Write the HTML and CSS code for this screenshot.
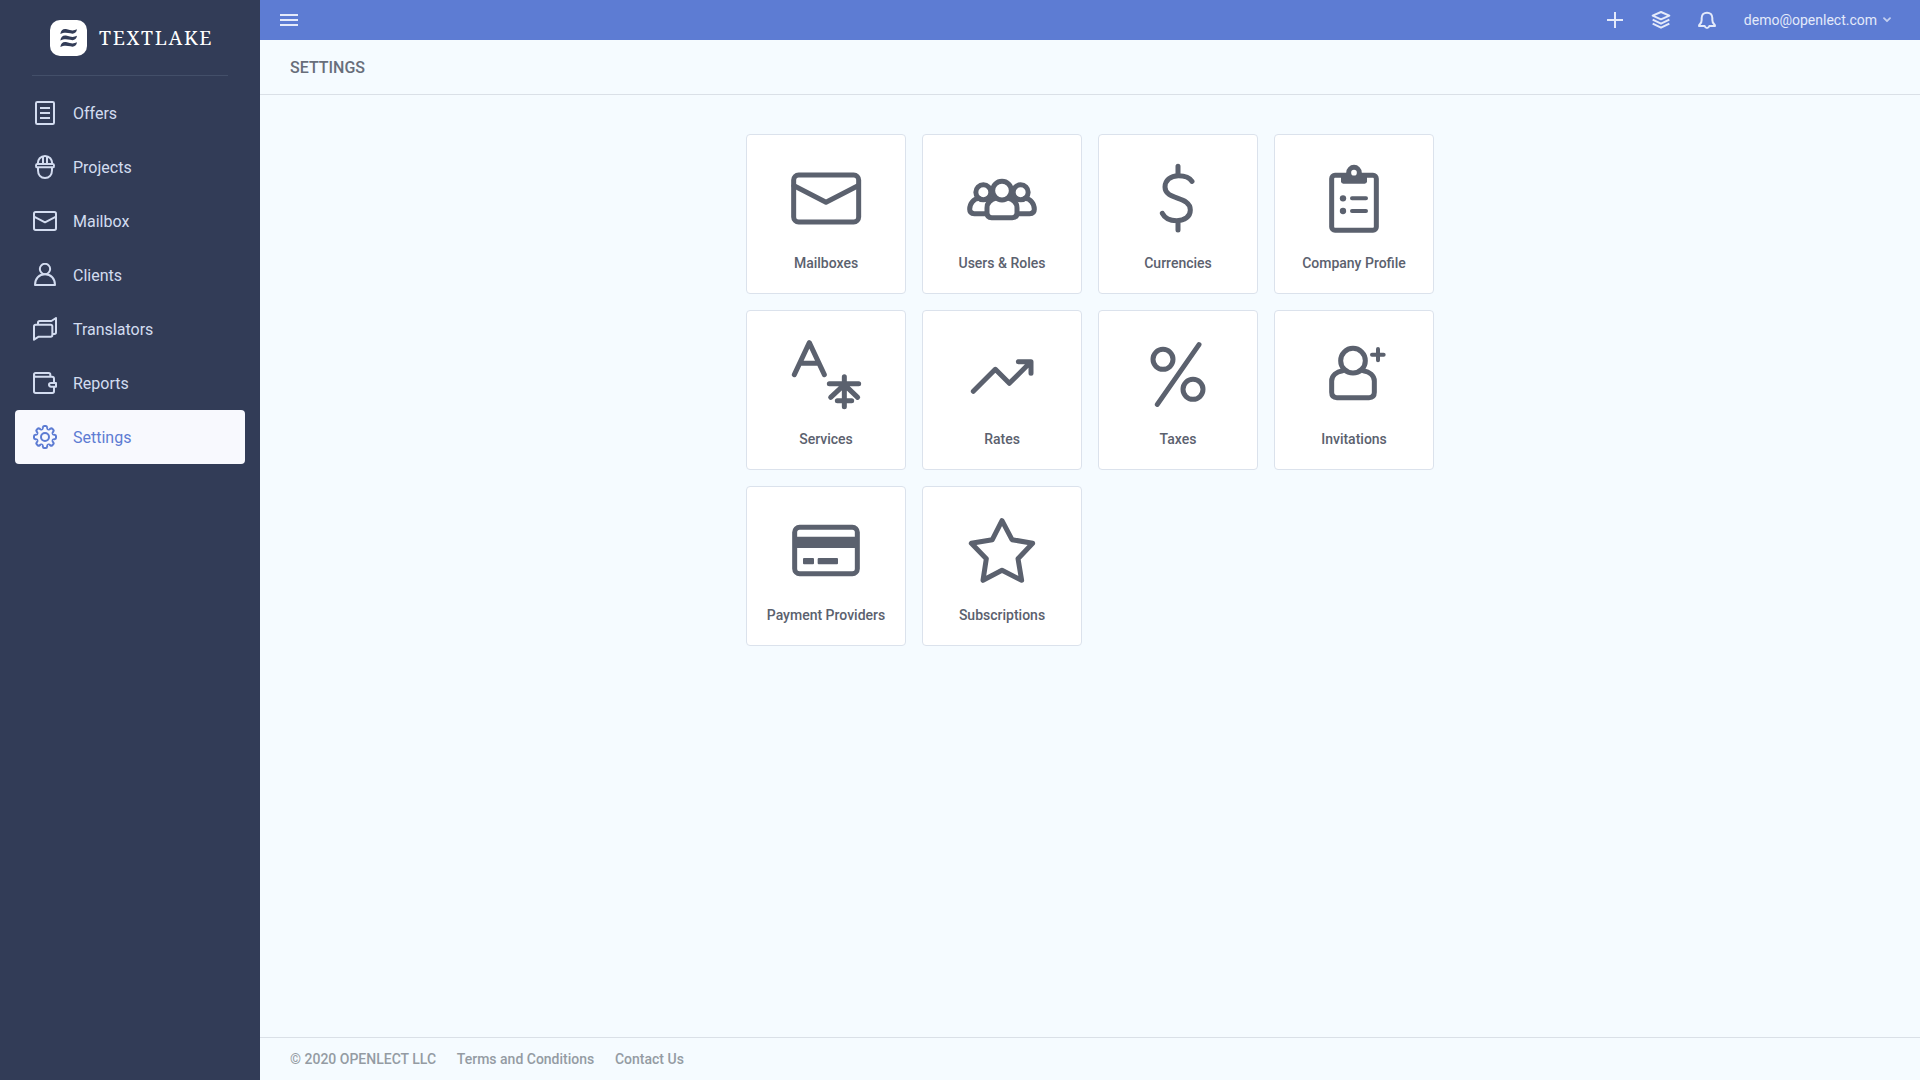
FILE: index.html
```html
<!DOCTYPE html>
<html lang="en">
<head>
<meta charset="utf-8">
<title>Settings - Textlake</title>
<link rel="stylesheet" href="styles.css">
</head>
<body>
<div class="app">
  <aside class="sidebar">
    <div class="brand">
      <svg class="brand-mark" viewBox="150 60 111 108"><rect x="150" y="60" width="111" height="108" rx="30" fill="#fff"/><g fill="#323c57"><path id="wave" d="M181 102C183 90 190 85 201 88C212 92 222 93 231 88C229 99 222 103 211 100C200 97 190 97 181 102Z"/><use href="#wave" y="19.500"/><use href="#wave" y="39"/></g></svg>
      <span class="brand-name">TEXTLAKE</span>
    </div>
    <nav class="menu">
      <a class="menu-item"><svg class="menu-icon" viewBox="99 303 72 72"><rect x="108" y="306" width="54" height="66" rx="4"/><path d="M120 324h30M120 339h30M120 354h30"/></svg>Offers</a>
      <a class="menu-item"><svg class="menu-icon" viewBox="99 465 72 72"><path d="M113 492C113 478 122 468 135 468S157 478 157 492M111 492C107 492 107 502 111 502H159C163 502 163 492 159 492ZM114 502V511C114 524 122 534 135 534S156 524 156 511V502M129 470V490M141 470V490"/></svg>Projects</a>
      <a class="menu-item"><svg class="menu-icon" viewBox="99 27 72 72"><rect x="102" y="36" width="66" height="54" rx="5"/><path d="M102 50L135 67L168 50"/></svg>Mailbox</a>
      <a class="menu-item"><svg class="menu-icon" viewBox="99 189 72 72"><circle cx="135" cy="207" r="15.500"/><path d="M105 255C105 236 117 223 135 223S165 236 165 255Z"/></svg>Clients</a>
      <a class="menu-item"><svg class="menu-icon" viewBox="99 351 72 72"><path d="M102 419V379Q102 374 107 374H152Q157 374 157 379V405Q157 410 152 410H116ZM114 374V368Q114 363 119 363H154L168 354V397Q168 402 163 402H157"/></svg>Translators</a>
      <a class="menu-item"><svg class="menu-icon" viewBox="99 513 72 72"><path d="M151 529V524Q151 519 146 519H107Q102 519 102 524V574Q102 579 107 579H157Q162 579 162 574V562M162 547V536Q162 530 156 530H107Q102 530 102 524M168 549V560H153Q147 560 147 554.500T153 549Z"/></svg>Reports</a>
      <a class="menu-item active"><svg class="menu-icon" viewBox="-36 -36 72 72"><circle r="12"/><g><path id="tooth" d="M-9.800 -23.700C-8 -23 -7 -25 -6.500 -28C-6 -32 -5 -33 -3 -33H3C5 -33 6 -32 6.500 -28C7 -25 8 -23 9.800 -23.700"/><use href="#tooth" transform="rotate(45)"/><use href="#tooth" transform="rotate(90)"/><use href="#tooth" transform="rotate(135)"/><use href="#tooth" transform="rotate(180)"/><use href="#tooth" transform="rotate(225)"/><use href="#tooth" transform="rotate(270)"/><use href="#tooth" transform="rotate(315)"/></g></svg>Settings</a>
    </nav>
  </aside>
  <div class="page">
    <header class="topbar">
      <svg class="burger" viewBox="0 0 18 12"><path d="M0 1h18M0 6h18M0 11h18"/></svg>
      <div class="tools">
        <svg class="tool" viewBox="129 24 72 72"><path d="M165 36V84M141 60H189"/></svg>
        <svg class="tool fine" viewBox="267 24 72 72"><path d="M278 47L303 36L328 47L303 58ZM278 59L303 71L328 59M278 71L303 83L328 71"/></svg>
        <svg class="tool fine" viewBox="405 24 72 72"><path d="M417 78C417 71 425 73 425 60V54C425 44 432 38 441 38S457 44 457 54V60C457 73 465 71 465 78H448Q446 84 441 84T434 78Z"/></svg>
      </div>
      <div class="account">demo@openlect.com<svg class="chevron" viewBox="0 0 8 6"><path d="M1 1.200l3 3 3-3"/></svg></div>
    </header>
    <div class="title">SETTINGS</div>
    <main class="content">
      <div class="cards">
        <a class="card"><svg class="card-icon" viewBox="180 126 216 216"><rect x="191" y="165" width="195" height="141" rx="15"/><path d="M192 197L288 247L384 197"/></svg>Mailboxes</a>
        <a class="card"><svg class="card-icon" viewBox="708 126 216 216"><circle cx="816" cy="212" r="28"/><circle cx="760" cy="217" r="22.500"/><circle cx="872" cy="217" r="22.500"/><path d="M797 234C780 239 771 248 771 264V279Q771 293 785 293H847Q861 293 861 279V264C861 248 852 239 835 234"/><path d="M746 235C731 237 719 250 719 268Q719 281 733 281H768M886 235C901 237 913 250 913 268Q913 281 899 281H864"/></svg>Users &amp; Roles</a>
        <a class="card"><svg class="card-icon" viewBox="156 126 216 216"><path d="M264 139V166M264 302V330M306 184C298 171 282 167 265 167C241 167 225 182 225 201C225 242 301 227 301 270C301 290 284 302 260 302C241 302 225 296 217 280"/></svg>Currencies</a>
        <a class="card"><svg class="card-icon" viewBox="684 126 216 216"><rect x="725" y="166" width="134" height="165" rx="10"/><path d="M753 163H831V184Q831 191 824 191H760Q753 191 753 184Z" fill="currentColor" stroke="none"/><circle cx="792" cy="158" r="16" fill="#fff"/><g fill="currentColor" stroke="none"><circle cx="759" cy="235" r="9.500"/><circle cx="759" cy="273" r="9.500"/></g><path class="thin" d="M786 235H828M786 273H828"/></svg>Company Profile</a>
        <a class="card"><svg class="card-icon" viewBox="180 114 216 216"><path d="M193 224L238 128L283 224M211 190H265M343 230V320M298 251H386M343 254L302 292M343 254L383 292M322 302H365"/></svg>Services</a>
        <a class="card"><svg class="card-icon" viewBox="708 114 216 216"><path d="M730 274L796 208L838 250L902 186M865 185H903V220"/></svg>Rates</a>
        <a class="card"><svg class="card-icon" viewBox="156 114 216 216"><circle cx="219" cy="178" r="30"/><circle cx="309" cy="268" r="30"/><path d="M327 134L202 313"/></svg>Taxes</a>
        <a class="card"><svg class="card-icon" viewBox="684 114 216 216"><circle cx="789" cy="182" r="37"/><path d="M758 212C740 215 725 226 725 243V277Q725 293 741 293H837Q853 293 853 277V243C853 226 838 215 820 212"/><path class="thin" d="M864 147V181M846 164H881"/></svg>Invitations</a>
        <a class="card"><svg class="card-icon" viewBox="180 114 216 216"><rect x="194" y="154" width="188" height="139" rx="15"/><g fill="currentColor" stroke="none"><path d="M194 182H382V216H194Z"/><rect x="219" y="246" width="33" height="19" rx="3"/><rect x="263" y="246" width="61" height="19" rx="3"/></g></svg>Payment Providers</a>
        <a class="card"><svg class="card-icon" viewBox="708 114 216 216"><path d="M816 134L846 191L908 202L864 248L875 313L816 283L759 313L769 248L724 202L787 191Z"/></svg>Subscriptions</a>
      </div>
    </main>
    <footer class="footer"><span>© 2020 OPENLECT LLC</span><a>Terms and Conditions</a><a>Contact Us</a></footer>
  </div>
</div>
</body>
</html>
```
FILE: styles.css
```css
* { box-sizing: border-box; }
body { margin: 0; font-family: Roboto, "Liberation Sans", sans-serif; background: #f5fbff; }
svg { display: block; flex: none; fill: none; stroke-linecap: round; stroke-linejoin: round; }
.app { display: flex; height: 100vh; }
.sidebar { width: 260px; flex: none; background: #323c57; }
.brand { display: flex; align-items: center; height: 76px; margin: 0 32px; padding-left: 18px; border-bottom: 1px solid #434f69; }
.brand-mark { width: 37px; height: 36px; }
.brand-name { margin-left: 12px; font: 19.5px/24px "Noto Serif", "DejaVu Serif Condensed", "DejaVu Serif", serif; letter-spacing: 1.7px; color: #fff; }
.menu { display: flex; flex-direction: column; padding: 10px 15px; }
.menu-item { display: flex; align-items: center; height: 54px; padding-left: 18px; gap: 16px; border-radius: 4px; font-size: 16px; color: #d3dcf0; }
.menu-item.active { background: #f8f9fe; color: #5d7cd3; }
.menu-icon { width: 24px; height: 24px; stroke: currentColor; stroke-width: 6; stroke-linecap: butt; }
.page { display: flex; flex-direction: column; flex: 1; min-width: 0; }
.topbar { display: flex; align-items: center; height: 40px; padding: 0 29px 0 20px; background: #5d7cd3; color: #e4eafa; }
.burger { width: 18px; height: 12px; stroke: currentColor; stroke-width: 2; stroke-linecap: butt; }
.tools { display: flex; gap: 22px; margin-left: auto; }
.tool { width: 24px; height: 24px; stroke: currentColor; stroke-width: 6; stroke-linecap: butt; }
.tool.fine { stroke-width: 6; }
.account { display: flex; align-items: center; gap: 6px; margin-left: 25px; font-size: 14px; }
.chevron { width: 8px; height: 6px; stroke: #c3cff0; stroke-width: 1.8; }
.title { height: 55px; padding-left: 30px; line-height: 56px; border-bottom: 1px solid #dae0e7; font-size: 16px; font-weight: 500; color: #686e7a; }
.content { flex: 1; padding-top: 39px; }
.cards { display: grid; grid-template-columns: repeat(4, 160px); gap: 16px; justify-content: center; }
.card { display: flex; flex-direction: column; align-items: center; height: 160px; padding-top: 27px; border: 1px solid #dbe2ec; border-radius: 4px; background: #fff; font-size: 14px; line-height: 20px; font-weight: 500; color: #5b616e; }
.card-icon { width: 72px; height: 72px; margin-bottom: 19px; stroke: currentColor; stroke-width: 15; }
.card-icon .thin { stroke-width: 12; }
.footer { display: flex; gap: 20.7px; height: 43px; padding-left: 30px; line-height: 43px; border-top: 1px solid #dae0e7; font-size: 14px; font-weight: 500; color: #949ba3; }
```
